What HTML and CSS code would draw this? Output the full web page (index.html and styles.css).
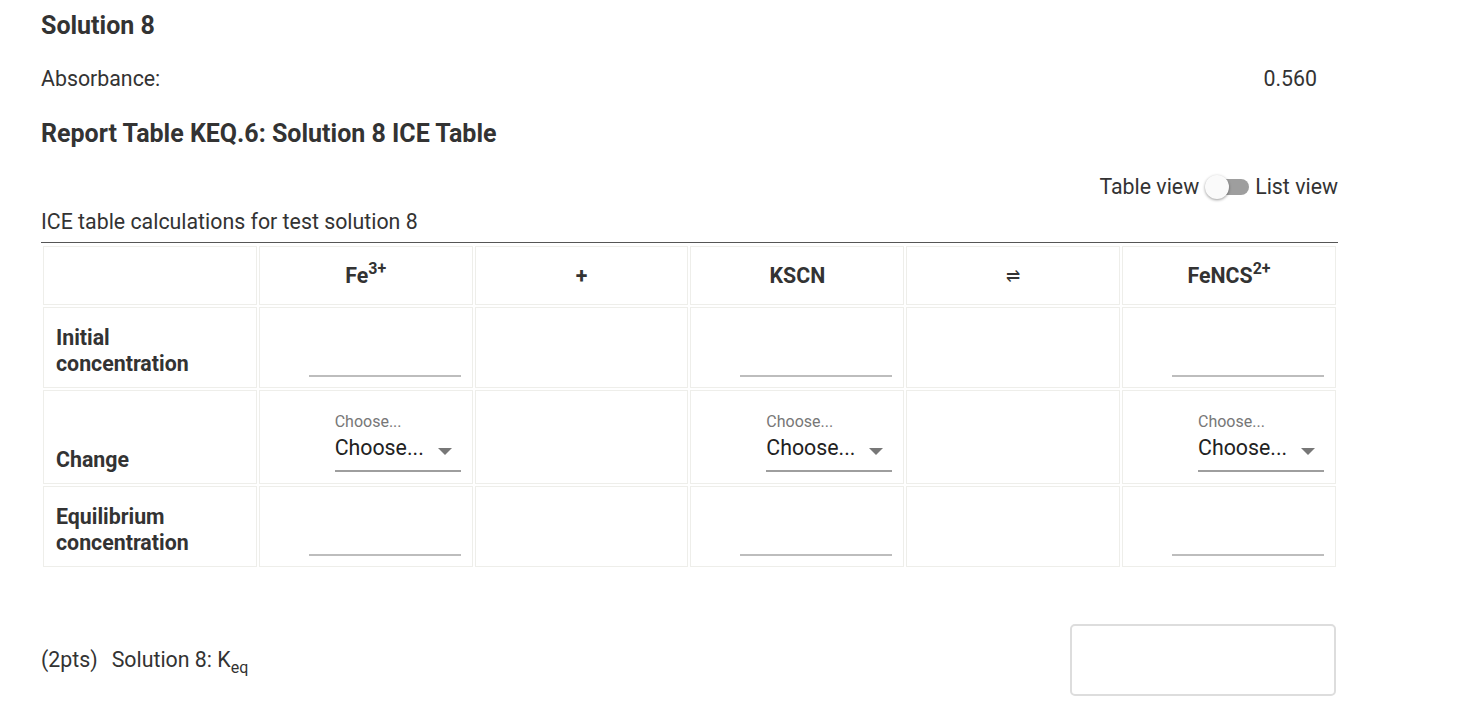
FILE: index.html
```html
<!DOCTYPE html>
<html>
<head>
<meta charset="utf-8">
<link rel="stylesheet" href="styles.css">
</head>
<body>
<div class="page">
  <h2 class="title">Solution 8</h2>
  <div class="absorb">
    <span>Absorbance:</span>
    <span class="val">0.560</span>
  </div>
  <h2 class="title report">Report Table KEQ.6: Solution 8 ICE Table</h2>
  <div class="toggle-row">
    <span>Table view</span>
    <span class="switch"><span class="track"></span><span class="thumb"></span></span>
    <span>List view</span>
  </div>
  <div class="caption">ICE table calculations for test solution 8</div>
  <table class="ice">
    <tr class="head">
      <th></th>
      <th>Fe<sup>3+</sup></th>
      <th>+</th>
      <th>KSCN</th>
      <th class="eq">&#8652;</th>
      <th>FeNCS<sup>2+</sup></th>
    </tr>
    <tr class="r1">
      <td class="lbl">Initial<br>concentration</td>
      <td><div class="inp"></div></td>
      <td></td>
      <td><div class="inp"></div></td>
      <td></td>
      <td><div class="inp"></div></td>
    </tr>
    <tr class="r2">
      <td class="lbl">Change</td>
      <td><div class="sel"><div class="sel-lbl">Choose...</div><div class="sel-val"><span>Choose...</span><span class="arrow"></span></div></div></td>
      <td></td>
      <td><div class="sel"><div class="sel-lbl">Choose...</div><div class="sel-val"><span>Choose...</span><span class="arrow"></span></div></div></td>
      <td></td>
      <td><div class="sel"><div class="sel-lbl">Choose...</div><div class="sel-val"><span>Choose...</span><span class="arrow"></span></div></div></td>
    </tr>
    <tr class="r3">
      <td class="lbl">Equilibrium<br>concentration</td>
      <td><div class="inp"></div></td>
      <td></td>
      <td><div class="inp"></div></td>
      <td></td>
      <td><div class="inp"></div></td>
    </tr>
  </table>
  <div class="keq-row">
    <div class="keq-lbl"><span class="pts">(2pts)</span>Solution 8: K<sub>eq</sub></div>
    <div class="keq-box"></div>
  </div>
</div>
</body>
</html>
```
FILE: styles.css
```css
html, body {
  margin: 0;
  padding: 0;
  background: #fff;
}
body {
  font-family: Roboto, "Liberation Sans", sans-serif;
  color: #333;
  font-size: 21.33px;
}
.page {
  width: 1297px;
  padding-left: 41px;
}
.title {
  font-size: 25px;
  font-weight: 700;
  margin: 0;
  line-height: 30px;
  padding-top: 11px;
  color: #333;
}
.absorb {
  display: flex;
  justify-content: space-between;
  margin-top: 26px;
  line-height: 24px;
  padding-right: 21px;
}
.report {
  margin-top: 28px;
  padding-top: 0;
}
.toggle-row {
  display: flex;
  justify-content: flex-end;
  align-items: center;
  gap: 6px;
  margin-top: 26px;
  line-height: 24px;
}
.switch {
  position: relative;
  width: 44px;
  height: 24px;
  display: inline-block;
}
.track {
  position: absolute;
  left: 5px;
  top: 4px;
  width: 39px;
  height: 16px;
  border-radius: 8px;
  background: #9e9e9e;
}
.thumb {
  position: absolute;
  left: 0;
  top: 0;
  width: 24px;
  height: 24px;
  border-radius: 50%;
  background: #fafafa;
  box-shadow: 0 1px 3px rgba(0,0,0,0.4);
}
.caption {
  margin-top: 11px;
  line-height: 24px;
  padding-bottom: 8px;
  border-bottom: 1px solid #555;
}
.ice {
  width: 1297px;
  border-collapse: separate;
  border-spacing: 2px;
  margin-top: 1px;
  table-layout: fixed;
}
.ice th, .ice td {
  border: 1px solid #eeeeea;
  padding: 0 11px 12px 12px;
}
.ice th {
  font-weight: 700;
  height: 57px;
  padding: 0;
  text-align: center;
  vertical-align: middle;
  font-size: 21.33px;
}
.ice th sup {
  font-size: 16px;
  line-height: 0;
  vertical-align: 9px;
}
.ice th.eq {
  font-weight: 400;
  font-size: 17px;
}
.ice td {
  vertical-align: bottom;
}
.r1 td { height: 67px; }
.r2 td { height: 80px; }
.r3 td { height: 67px; }
.lbl {
  font-weight: 700;
  line-height: 26px;
}
.r1 .lbl, .r3 .lbl {
  padding-bottom: 10px;
}
.r2 .lbl {
  padding-bottom: 10px;
}
.inp {
  width: 152px;
  margin-left: auto;
  border-bottom: 2px solid #bdbdbd;
  height: 0;
  margin-bottom: -2px;
}
.sel {
  width: 126px;
  margin-left: auto;
  border-bottom: 2px solid #9e9e9e;
  margin-bottom: -1px;
}
.sel-lbl {
  font-size: 16px;
  color: #777;
  line-height: 18px;
}
.sel-val {
  display: flex;
  justify-content: space-between;
  align-items: center;
  font-size: 21.33px;
  color: #222;
  line-height: 34px;
  padding-bottom: 5px;
}
.arrow {
  width: 0;
  height: 0;
  border-left: 7px solid transparent;
  border-right: 7px solid transparent;
  border-top: 7px solid #777;
  margin-right: 9px;
  margin-top: 6px;
}
.keq-row {
  display: flex;
  justify-content: space-between;
  align-items: center;
  margin-top: 55px;
  padding-right: 2px;
}
.keq-lbl {
  line-height: 24px;
}
.pts {
  margin-right: 14px;
}
.keq-lbl sub {
  font-size: 16px;
  vertical-align: -6px;
  line-height: 0;
}
.keq-box {
  width: 262px;
  height: 68px;
  border: 2px solid #ddd;
  border-radius: 5px;
}
```
